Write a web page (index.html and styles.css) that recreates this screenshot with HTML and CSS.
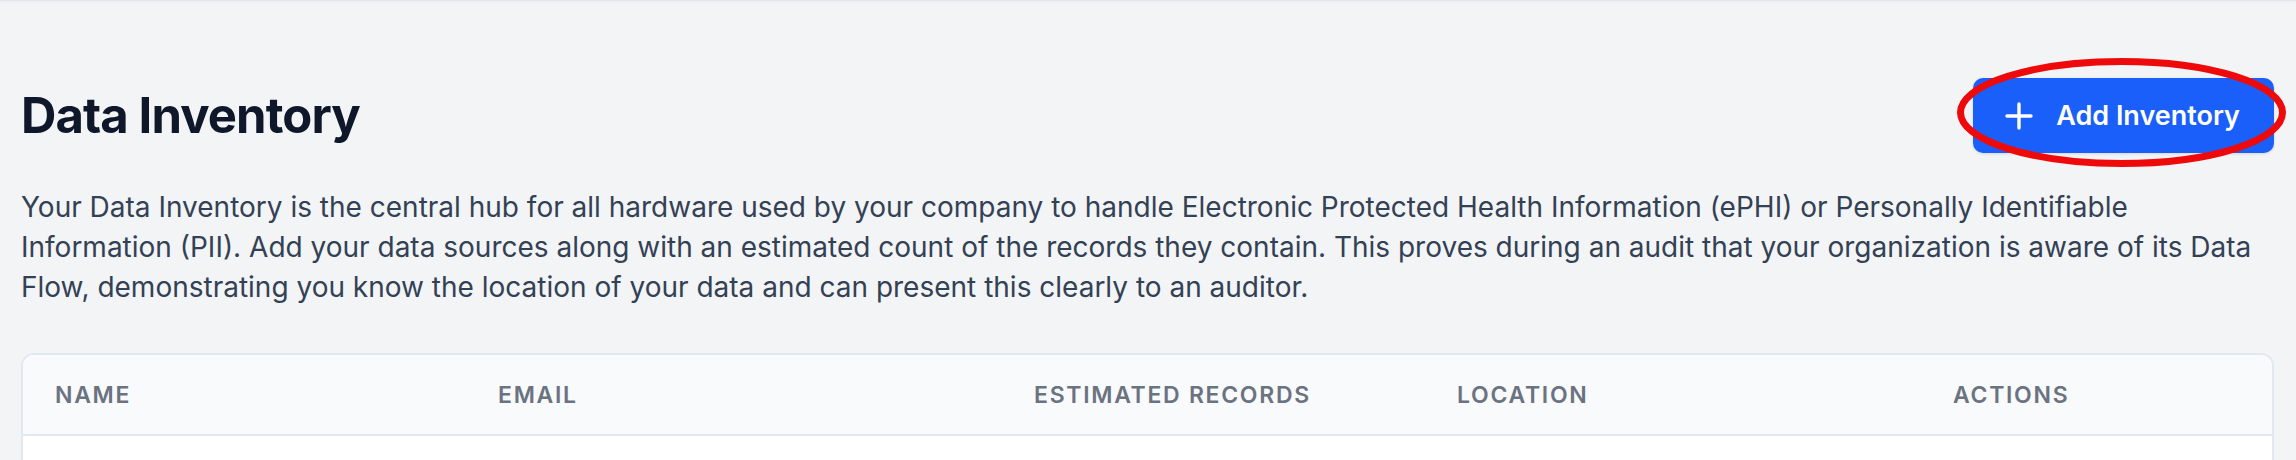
FILE: index.html
```html
<!DOCTYPE html>
<html lang="en">
<head>
<meta charset="utf-8">
<title>Data Inventory</title>
<link rel="stylesheet" href="styles.css">
</head>
<body>
<div class="topbar"></div>
<main class="page">
  <div class="page-head">
    <h1 class="title">Data Inventory</h1>
    <div class="btn-wrap">
      <button class="btn-primary" type="button">
        <svg class="btn-icon" width="28" height="28" viewBox="0 0 28 28" aria-hidden="true">
          <path d="M14 2v24M2 14h24" stroke="currentColor" stroke-width="3.4" stroke-linecap="round" fill="none"/>
        </svg>
        <span>Add Inventory</span>
      </button>
      <svg class="annotation" width="330" height="112" viewBox="0 0 330 112" aria-hidden="true">
        <ellipse cx="164.5" cy="55.5" rx="161" ry="51" fill="none" stroke="#ee0a0a" stroke-width="7"/>
      </svg>
    </div>
  </div>
  <p class="intro">Your Data Inventory is the central hub for all hardware used by your company to handle Electronic Protected Health Information (ePHI) or Personally Identifiable<br>Information (PII). Add your data sources along with an estimated count of the records they contain. This proves during an audit that your organization is aware of its Data<br>Flow, demonstrating you know the location of your data and can present this clearly to an auditor.</p>
  <section class="card">
    <div class="table-head">
      <div class="th">Name</div>
      <div class="th">Email</div>
      <div class="th">Estimated Records</div>
      <div class="th">Location</div>
      <div class="th">Actions</div>
    </div>
    <div class="table-body"></div>
  </section>
</main>
</body>
</html>
```
FILE: styles.css
```css
* { box-sizing: border-box; }
html, body { margin: 0; padding: 0; }
body {
  background: #f3f4f6;
  font-family: Inter, "Noto Sans", "Liberation Sans", sans-serif;
  color: #111827;
  height: 460px;
  overflow: hidden;
}
.topbar {
  height: 1px;
  background: #e5e7eb;
  box-shadow: 0 1px 4px rgba(0,0,0,0.08);
}
.page {
  padding: 77px 22px 0 21px;
}
.page-head {
  display: flex;
  align-items: center;
  justify-content: space-between;
}
.title {
  margin: 0;
  font-size: 49px;
  font-weight: 700;
  line-height: 60px;
  color: #0f172a;
  letter-spacing: -0.9px;
}
.btn-wrap {
  position: relative;
}
.btn-primary {
  display: flex;
  align-items: center;
  gap: 23px;
  height: 75px;
  padding: 0 34px 0 32px;
  border: 0;
  border-radius: 10px;
  background: #1b5ffa;
  color: #fff;
  font-family: inherit;
  font-size: 27px;
  font-weight: 600;
  box-shadow: 0 1px 3px rgba(0,0,0,0.12);
}
.btn-icon { flex: none; }
.annotation {
  position: absolute;
  left: -16px;
  top: -21px;
  pointer-events: none;
}
.intro {
  margin: 34px 0 0;
  font-size: 28px;
  line-height: 40px;
  color: #334155;
}
.card {
  margin-top: 46px;
  background: #fff;
  border: 2px solid #e2e8f0;
  border-bottom: 0;
  border-radius: 13px 13px 0 0;
  overflow: hidden;
}
.table-head {
  display: grid;
  grid-template-columns: 443px 536px 423px 496px 1fr;
  align-items: center;
  height: 81px;
  background: #f8fafc;
  border-bottom: 2px solid #e2e8f0;
}
.th {
  padding-left: 32px;
  font-size: 23px;
  font-weight: 600;
  letter-spacing: 1.7px;
  text-transform: uppercase;
  color: #6b7280;
}
.table-body {
  height: 40px;
  background: #fff;
}
```
